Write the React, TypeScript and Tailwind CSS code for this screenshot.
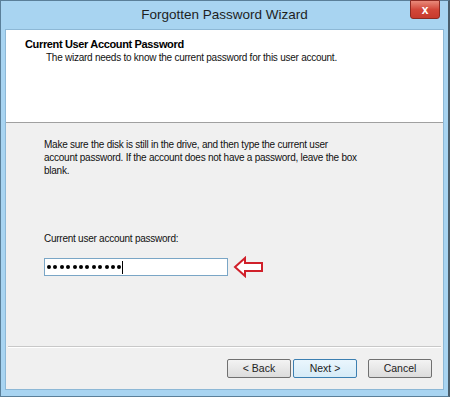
import React from "react";

export default function App() {
  const dots = Array.from({ length: 12 });
  return (
    <div
      className="w-[450px] h-[398px] bg-white overflow-hidden"
      style={{ fontFamily: '"Liberation Sans", Arial, sans-serif' }}
    >
      <div className="w-[450px] h-[397px] bg-[#a8d4f1] border border-[#5a7f99] border-r-2 border-r-[#4a5e6c] flex flex-col px-[4px] pb-[6px]">
        {/* Title bar */}
        <div className="h-[28px] flex items-center justify-center relative shrink-0">
          <span className="text-[13.5px] text-[#1e1e1e] pt-[1px]">Forgotten Password Wizard</span>
          <div className="absolute right-[4px] top-[-1px] w-[30px] h-[19px] bg-gradient-to-b from-[#e8897a] via-[#d2473a] to-[#c73a2e] border border-[#8e2a22] rounded-b-[3px] flex items-center justify-center">
            <span className="text-white font-bold text-[12px] leading-none">x</span>
          </div>
        </div>
        {/* Client */}
        <div className="flex-1 flex flex-col bg-[#f0f0f0] border border-[#8db8d6]">
          <div className="h-[93px] bg-white border-b border-[#a0a0a0] pl-[19px] pt-[7px] shrink-0">
            <div className="text-[11px] font-bold text-black leading-[14px] tracking-[-0.35px]">Current User Account Password</div>
            <div className="text-[10px] text-[#111] leading-[14px] pl-[21px] tracking-[-0.25px]">
              The wizard needs to know the current password for this user account.
            </div>
          </div>
          <div className="flex-1 flex flex-col pl-[38px] pt-[15px]">
            <p className="text-[10px] text-[#111] leading-[13px] tracking-[-0.25px]">
              Make sure the disk is still in the drive, and then type the current user
              <br />
              account password. If the account does not have a password, leave the box
              <br />
              blank.
            </p>
            <div className="mt-[55px] text-[10px] text-[#111] leading-[14px] tracking-[-0.25px]">Current user account password:</div>
            <div className="mt-[10px] flex items-center gap-[5px]">
              <div className="w-[184px] h-[18px] bg-white border border-[#7aa6c6] flex items-center pl-[2px]">
                <div className="flex items-center gap-[2.4px]">
                  {dots.map((_, i) => (
                    <span key={i} className="w-[4px] h-[4px] rounded-full bg-black" />
                  ))}
                </div>
                <span className="w-[1px] h-[13px] bg-black ml-[1px]" />
              </div>
              <svg width="32" height="22" viewBox="0 0 32 22">
                <path d="M2 11 L12 2 L12 7 L29 7 L29 15 L12 15 L12 20 Z" fill="white" stroke="#d0202a" strokeWidth="2" strokeLinejoin="miter" />
              </svg>
            </div>
            <div className="flex-1" />
          </div>
          <div className="h-[2px] bg-[#c8c8c8] border-b border-white mx-[2px]" />
          <div className="h-[41px] flex items-center justify-end pr-[11px] shrink-0">
            <div className="flex items-center">
              <button className="w-[64px] h-[19px] bg-gradient-to-b from-[#f3f3f3] to-[#dcdcdc] border border-[#707070] rounded-[2px] text-[10.5px] text-[#222] leading-none">&lt; Back</button>
              <button className="ml-[2px] w-[64px] h-[19px] bg-gradient-to-b from-[#eaf6fd] to-[#d6ebf7] border border-[#3c7fb1] rounded-[2px] text-[10.5px] text-[#222] leading-none">Next &gt;</button>
              <button className="ml-[11px] w-[64px] h-[19px] bg-gradient-to-b from-[#f3f3f3] to-[#dcdcdc] border border-[#707070] rounded-[2px] text-[10.5px] text-[#222] leading-none">Cancel</button>
            </div>
          </div>
        </div>
      </div>
    </div>
  );
}
